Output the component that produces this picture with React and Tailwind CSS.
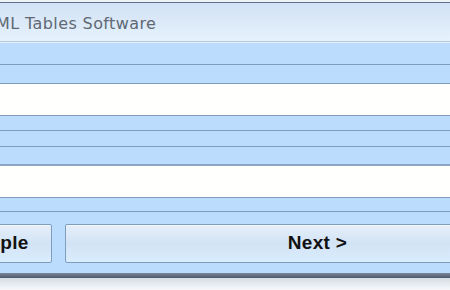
export default function App() {
  const band = 'bg-[#bcdcfd] border-b border-[#7e9dbf]';
  return (
    <div className="w-[450px] h-[290px] overflow-hidden bg-white font-['Liberation_Sans',sans-serif]">
      <div className="h-[2px] bg-[#eef3f8]" />
      <div className="h-px bg-[#5d7088]" />
      <div className="h-[39px] flex items-center pt-[4px] bg-gradient-to-b from-[#d3e2f5] via-[#dbe9f8] to-[#e7f3fd] border-b border-[#b4c9df]">
        <span className="-ml-[4px] text-[16px] text-[#5f6873] tracking-[0.4px] font-['DejaVu_Sans',sans-serif]">
          ML Tables Software
        </span>
      </div>
      <div className="h-px bg-[#e6f1fc]" />
      <div className={`h-[22px] ${band}`} />
      <div className={`h-[19px] ${band}`} />
      <div className="h-[32px] bg-[#fffffe] border-b border-[#7e9dbf]" />
      <div className={`h-[15px] ${band}`} />
      <div className={`h-[16px] ${band}`} />
      <div className="h-[19px] bg-[#bcdcfd] border-b-2 border-[#8aa4c2]" />
      <div className="h-[32px] bg-[#fffffe] border-b border-[#7e9dbf]" />
      <div className={`h-[14px] ${band}`} />
      <div className="bg-[#bcdcfd] pt-[12px] pb-[10px] flex gap-[13px]">
        <Btn className="w-[116px] -ml-[64px]">Sample</Btn>
        <Btn className="w-[505px]">Next &gt;</Btn>
      </div>
      <div className="h-[5px] bg-gradient-to-b from-[#7a8898] to-[#4d5a6a]" />
      <div className="h-[12px] bg-gradient-to-b from-[#d7dde4] to-[#f7f9fb]" />
    </div>
  );
}

function Btn({ className = '', children }) {
  return (
    <div
      className={`h-[39px] shrink-0 rounded-[2px] border border-[#7f9dbd] bg-gradient-to-b from-[#e6eff9] via-[#d2e3f5] to-[#d9edfc] shadow-[inset_0_1px_0_#f2f7fc] flex items-center justify-center ${className}`}
    >
      <span className="font-bold text-[19px] text-[#111] tracking-[0.3px]">{children}</span>
    </div>
  );
}
